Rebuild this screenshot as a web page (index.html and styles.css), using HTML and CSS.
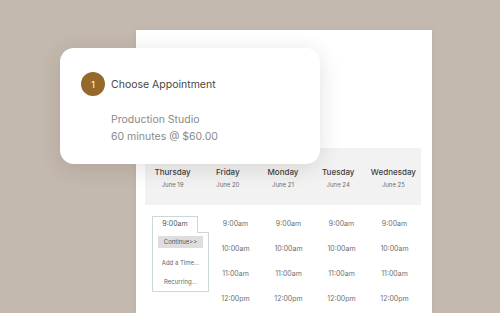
FILE: index.html
```html
<!DOCTYPE html>
<html>
<head>
<meta charset="utf-8">
<link rel="stylesheet" href="styles.css">
</head>
<body>
<div class="stage">
  <div class="panel">
    <div class="band">
      <div class="day"><div class="dname">Thursday</div><div class="ddate">June 19</div></div>
      <div class="day"><div class="dname">Friday</div><div class="ddate">June 20</div></div>
      <div class="day"><div class="dname">Monday</div><div class="ddate">June 21</div></div>
      <div class="day"><div class="dname">Tuesday</div><div class="ddate">June 24</div></div>
      <div class="day"><div class="dname">Wednesday</div><div class="ddate">June 25</div></div>
    </div>
    <div class="times">
      <div class="col first">
        <div class="popup">
          <div class="tab">9:00am</div>
          <div class="menu">
            <div class="btn">Continue&gt;&gt;</div>
            <div class="item">Add a Time...</div>
            <div class="item">Recurring...</div>
          </div>
        </div>
      </div>
      <div class="col"><div class="t">9:00am</div><div class="t">10:00am</div><div class="t">11:00am</div><div class="t">12:00pm</div></div>
      <div class="col"><div class="t">9:00am</div><div class="t">10:00am</div><div class="t">11:00am</div><div class="t">12:00pm</div></div>
      <div class="col"><div class="t">9:00am</div><div class="t">10:00am</div><div class="t">11:00am</div><div class="t">12:00pm</div></div>
      <div class="col"><div class="t">9:00am</div><div class="t">10:00am</div><div class="t">11:00am</div><div class="t">12:00pm</div></div>
    </div>
  </div>
  <div class="card">
    <div class="step">
      <div class="num">1</div>
      <div class="title">Choose Appointment</div>
    </div>
    <div class="info">
      <div class="line">Production Studio</div>
      <div class="line">60 minutes @ $60.00</div>
    </div>
  </div>
</div>
</body>
</html>
```
FILE: styles.css
```css
html, body {
  margin: 0;
  padding: 0;
  background: #c4b9ae;
  overflow: hidden;
}
body {
  width: 500px;
  height: 313px;
  font-family: Inter, "Noto Sans", sans-serif;
}
.stage {
  position: relative;
  width: 500px;
  height: 313px;
  padding-top: 30px;
  box-sizing: border-box;
  overflow: hidden;
}
.panel {
  margin-left: 136px;
  width: 296px;
  height: 283px;
  background: #fff;
  box-shadow: 0 0 6px rgba(0,0,0,0.06);
  padding-top: 118px;
  box-sizing: border-box;
}
.band {
  margin: 0 11px 0 9px;
  height: 57px;
  background: #f2f2f2;
  display: grid;
  grid-template-columns: repeat(5, 1fr);
  align-items: start;
  padding-top: 19px;
  box-sizing: border-box;
}
.day {
  text-align: center;
}
.dname {
  font-size: 8px;
  font-weight: 500;
  color: #3e3e3e;
  line-height: 10px;
}
.ddate {
  font-size: 6px;
  color: #6e6e6e;
  line-height: 8px;
  margin-top: 4px;
}
.times {
  margin: 0 11px 0 9px;
  display: grid;
  grid-template-columns: repeat(5, 1fr);
  padding-top: 6px;
}
.col {
  text-align: center;
}
.t {
  font-size: 7px;
  color: #6f6f6f;
  line-height: 25px;
}
.first {
  position: relative;
  z-index: 1;
}
.popup {
  margin-left: 7px;
  margin-top: 5px;
  width: 57px;
  text-align: center;
}
.tab {
  width: 46px;
  height: 16px;
  box-sizing: border-box;
  border: 1px solid #cbd9d6;
  border-bottom: none;
  font-size: 7px;
  color: #555;
  line-height: 14px;
  background: #fff;
}
.menu {
  position: relative;
  width: 57px;
  height: 60px;
  box-sizing: border-box;
  border: 1px solid #cbd9d6;
  border-top: none;
  padding: 4px 5px 0;
  background: #fff;
}
.menu::before {
  content: "";
  position: absolute;
  top: 0;
  right: -1px;
  width: 12px;
  height: 1px;
  background: #cbd9d6;
}
.btn {
  background: #dedede;
  font-size: 6px;
  color: #555;
  line-height: 12px;
  height: 12px;
}
.item {
  font-size: 6px;
  color: #666;
  line-height: 8px;
  margin-top: 11px;
}
.card {
  position: absolute;
  left: 60px;
  top: 48px;
  width: 260px;
  height: 116px;
  background: #fff;
  border-radius: 14px;
  box-shadow: 0 4px 22px rgba(60,45,30,0.14);
  padding: 24px 0 0 21px;
  box-sizing: border-box;
}
.step {
  display: flex;
  align-items: center;
  gap: 6px;
}
.num {
  width: 24px;
  height: 24px;
  border-radius: 50%;
  background: #96692a;
  color: #fff;
  font-size: 9px;
  display: flex;
  align-items: center;
  justify-content: center;
}
.title {
  font-size: 10.5px;
  color: #474747;
}
.info {
  margin-left: 30px;
  margin-top: 15px;
}
.line {
  font-size: 10.5px;
  color: #8a8a8a;
  line-height: 17px;
}
```
